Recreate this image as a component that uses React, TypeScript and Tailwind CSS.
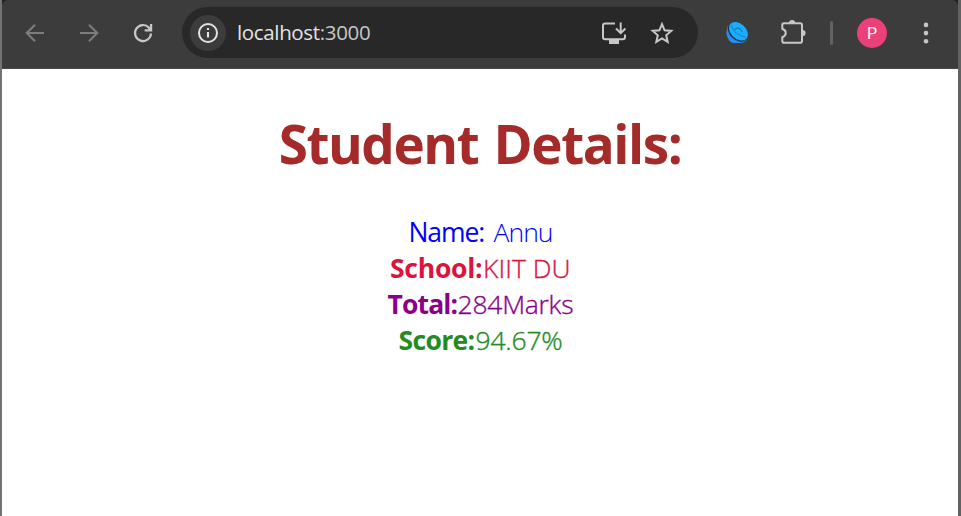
import type { ReactNode } from "react";

const FONT = "font-['Open_Sans','Noto_Sans',sans-serif]";

function Icon({ children, className = "" }: { children: ReactNode; className?: string }) {
  return (
    <svg viewBox="0 0 36 36" fill="none" className={`size-9 shrink-0 ${className}`}>
      {children}
    </svg>
  );
}

function Toolbar() {
  return (
    <header className="flex h-[69px] items-start border-b border-[#4a4547] bg-[#3c3c3c] pt-[7px] pl-[15px]">
      <div className="mt-2 flex gap-[18px]">
        <Icon className="text-[#7d7d7d]">
          <path d="M27 18H10.5M18 9.7 9.7 18l8.3 8.3" stroke="currentColor" strokeWidth="2" />
        </Icon>
        <Icon className="text-[#7d7d7d]">
          <path d="M9 18h16.500M18 9.700 26.300 18 18 26.300" stroke="currentColor" strokeWidth="2" />
        </Icon>
        <Icon className="text-[#c7c7c7]">
          <path d="M26 18.500A8 8 0 1 1 24 12.700L26 14.900" stroke="currentColor" strokeWidth="2.200" />
          <path d="M27.200 9v7.400h-7.500v-2.200h3.500l1.800-1.600V9Z" fill="currentColor" />
        </Icon>
      </div>
      <div className="ml-[21px] flex h-[51px] w-[516px] items-center rounded-full bg-[#282828] pl-2">
        <div className="size-9 shrink-0 rounded-full bg-[#3c3c3c]">
          <Icon className="text-[#e3e3e3]">
            <circle cx="18" cy="18" r="9" stroke="currentColor" strokeWidth="2" />
            <path d="M18 17v5.500M18 13v2.100" stroke="currentColor" strokeWidth="2.100" />
          </Icon>
        </div>
        <div className={`${FONT} ml-[11px] w-[359px] whitespace-nowrap pb-0.5 text-[20.5px] leading-7 tracking-[-0.35px] text-[#e3e3e3]`}>
          localhost<span className="text-[#c7c7c7]">:3000</span>
        </div>
        <Icon className="text-[#c7c7c7]">
          <path d="M19 8.500H9.300Q7 8.500 7 10.800v11.200Q7 24.300 9.300 24.300h17.400Q29 24.300 29 22V19.500M24.700 7.500v10.500M20 13.500l4.700 4.700 4.700-4.700" stroke="currentColor" strokeWidth="2" />
          <path d="M13 24.500h10V29H13Z" fill="currentColor" />
        </Icon>
        <Icon className="ml-3 text-[#c7c7c7]">
          <path d="m18 9.100 2.600 6.200 6.700.6-5.100 4.400 1.500 6.600-5.700-3.500-5.700 3.500 1.500-6.600-5.100-4.400 6.700-.6Z" stroke="currentColor" strokeWidth="2" />
        </Icon>
      </div>
      <div className="mt-2 ml-[21px] flex items-center">
        <Icon>
          <path d="M7.800 15.500C6.300 19 9.800 28 14.500 28h7l-4-6Z" fill="#288ff4" />
          <ellipse cx="18.200" cy="18" rx="11.800" ry="8.300" transform="rotate(43 18.200 18)" fill="#2589ed" />
          <ellipse cx="18.700" cy="17.200" rx="11.500" ry="7.700" transform="rotate(43 18.700 17.200)" fill="#203449" />
          <ellipse cx="19.400" cy="16.200" rx="10.900" ry="7.600" transform="rotate(43 19.400 16.200)" fill="#19adff" />
          <path d="M12.300 10.200c1.800 6.700 7.300 10.700 14.400 11.900" stroke="#176da9" strokeWidth=".8" />
          <path d="M15.700 15c2-3.400 6.500-1.700 7 1.700" stroke="#125b91" strokeWidth="1" />
        </Icon>
        <Icon className="ml-[19px] text-[#c7c7c7]">
          <path d="M10 8.300h16.200q1.800 0 1.800 1.800v15.800q0 1.800-1.800 1.800H10q-1.700 0-1.700-1.800v-3.600c4.600-1.800 4.600-6.800 0-8.600V10.100q0-1.800 1.700-1.800Z" stroke="currentColor" strokeWidth="2" />
          <path d="M15 8a3.100 3.100 0 0 1 6.200 0ZM28.500 14.900a3.100 3.100 0 0 1 0 6.200Z" fill="currentColor" />
        </Icon>
        <div className="ml-5 h-6 w-[3px] rounded-full bg-[#626262]" />
        <div className="ml-6 flex size-[30px] items-center justify-center rounded-full bg-[#ec407a] pt-px font-['Roboto',sans-serif] text-base text-white">
          P
        </div>
        <Icon className="ml-[21px] text-[#c7c7c7]">
          <circle cx="18" cy="9.900" r="2.300" fill="currentColor" />
          <circle cx="18" cy="18.100" r="2.300" fill="currentColor" />
          <circle cx="18" cy="26.300" r="2.300" fill="currentColor" />
        </Icon>
      </div>
    </header>
  );
}

function StudentDetails() {
  return (
    <main className={`${FONT} text-[26.5px] leading-9 whitespace-nowrap`}>
      <h1 className="mt-[39px] flex h-[72px] justify-center text-[53px] leading-[72px] font-bold tracking-[-1.45px] [word-spacing:3px] text-[#a52a2a]">
        Student Details:
      </h1>
      <div className="mt-[34px] flex flex-col items-center pl-px font-light">
        <p className="flex h-9 text-[#0000ff]">
          <span className="w-[85px] font-normal tracking-[-1.1px]">Name:</span>
          <span className="w-[59px] tracking-[-0.95px]">Annu</span>
        </p>
        <p className="flex h-9 text-[#dc143c]">
          <b className="w-[93px] font-bold tracking-[-0.25px]">School:</b>
          <span className="w-[88px] tracking-[0.05px] [-webkit-text-stroke:0.35px]">KIIT DU</span>
        </p>
        <p className="flex h-9 text-[#8b008b]">
          <b className="w-[70px] font-bold tracking-[-0.85px]">Total:</b>
          <span className="w-[116px] tracking-[-0.25px] [-webkit-text-stroke:0.35px]">284Marks</span>
        </p>
        <p className="flex h-9 text-[#228b22]">
          <b className="w-[77px] font-bold tracking-[-0.65px]">Score:</b>
          <span className="w-[87px] tracking-[-0.2px] [-webkit-text-stroke:0.35px]">94.67%</span>
        </p>
      </div>
    </main>
  );
}

export default function App() {
  return (
    <div className="h-[516px] w-[961px] overflow-hidden border-r-[3px] border-l-2 border-r-[#626262] border-l-[#737373] bg-white">
      <div className="bg-[#222222]">
        <div className="overflow-hidden rounded-t-md">
          <Toolbar />
        </div>
      </div>
      <StudentDetails />
    </div>
  );
}
